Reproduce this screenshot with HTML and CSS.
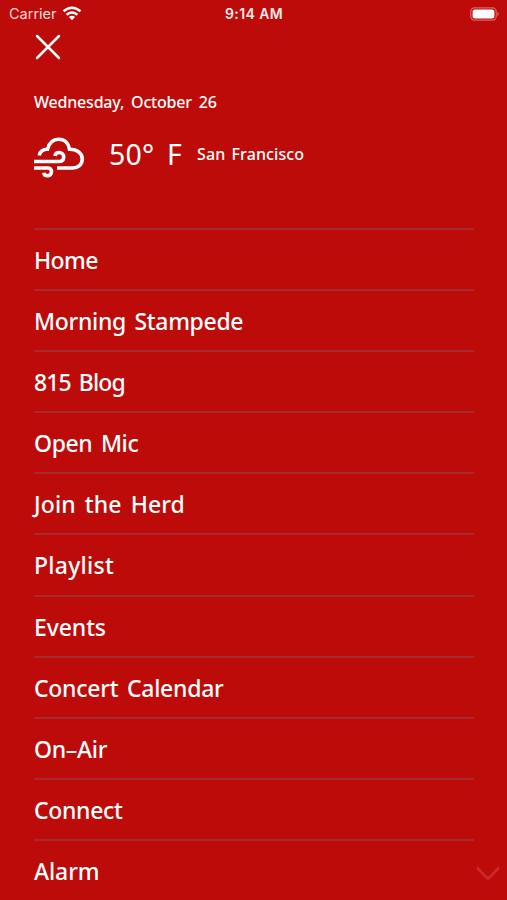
FILE: index.html
```
<!DOCTYPE html>
<html lang="en">
<head>
<meta charset="utf-8">
<title>Menu</title>
<link rel="stylesheet" href="styles.css">
</head>
<body>
<div class="screen">
  <header class="status">
    <div class="carrier"><span>Carrier</span>
      <svg width="20" height="16" viewBox="0 0 20 16" fill="none" stroke="#fff" stroke-width="2.500"><path d="M1.500 5.300Q10-1.700 18.500 5.300M4.600 8.800Q10 4.100 15.400 8.800"/><path d="M6.900 11Q10 8.500 13.100 11L10 14.200Z" fill="#fff" stroke="none"/></svg>
    </div>
    <div class="time">9:14 AM</div>
    <svg class="battery" width="29" height="14" viewBox="0 0 29 14"><rect x=".8" y=".8" width="25.400" height="12.400" rx="3.600" fill="none" stroke="#dc6464" stroke-width="1.200"/><rect x="2.600" y="2.600" width="21.800" height="8.800" rx="2" fill="#fff"/><path d="M27.300 5v4q1.500-.7 1.500-2t-1.500-2Z" fill="#dc6464"/></svg>
  </header>
  <button class="close" aria-label="Close"><svg width="26" height="26" viewBox="0 0 26 26" fill="none" stroke="#fff" stroke-width="2.500" stroke-linecap="round"><path d="M2 2 24 24M24 2 2 24"/></svg></button>
  <p class="date">Wednesday, October 26</p>
  <section class="weather">
    <svg class="cloud" width="52" height="42" viewBox="0 0 52 42" fill="none" stroke="#fff" stroke-width="3.600"><path d="M6.200 18.500C7 14.500 10 12.300 14.500 12.300C16 6 20 2.200 25.700 2.200C31.500 2.200 35.500 6 36.500 12.200C44.500 12.200 49.300 16.500 49.300 22C49.300 27.500 45 31 39.500 31H24"/><path d="M1 24.500H25.500C29 24.500 30.700 22.500 30.700 19.900C30.700 17.200 28.800 15.500 26.200 15.500C23.800 15.500 22.200 16.700 22 19"/><path d="M1 31H14.500C17.300 31 18.500 32.700 18.500 34.800C18.500 37.200 16.800 38.700 14.500 38.700C12.500 38.700 11 37.700 10.800 35.700"/></svg>
    <span class="temp">50° F</span>
    <span class="city">San Francisco</span>
  </section>
  <nav class="menu">
    <a class="home">Home</a>
    <a class="stampede">Morning Stampede</a>
    <a class="blog">815 Blog</a>
    <a class="mic">Open Mic</a>
    <a class="herd">Join the Herd</a>
    <a class="playlist">Playlist</a>
    <a class="events">Events</a>
    <a class="concert">Concert Calendar</a>
    <a class="onair">On–Air</a>
    <a class="connect">Connect</a>
    <a class="alarm">Alarm</a>
  </nav>
  <svg class="more" width="24" height="16" viewBox="0 0 24 16" fill="none" stroke="#c92929" stroke-width="2.800"><path d="M1 1.500 12 13 23 1.500"/></svg>
</div>
</body>
</html>
```
FILE: styles.css
```
* { box-sizing: border-box; }
body { margin: 0; background: #bd0b0a; color: #fff; font-family: "Noto Sans", sans-serif; }
.screen { position: relative; width: 507px; height: 900px; overflow: hidden; }
.status { display: grid; grid-template-columns: 1fr auto 1fr; align-items: center; height: 27px; padding: 0 8px 0 9px; font-family: Inter, sans-serif; }
.carrier { display: flex; align-items: center; gap: 5px; font-size: 14.5px; color: #fbdcdc; }
.time { font-size: 14px; font-weight: 600; letter-spacing: .4px; color: #ffe9e9; }
.battery { justify-self: end; }
.close { display: block; margin: 7px 0 0 35px; padding: 0; border: 0; background: none; height: 26px; width: 26px; }
.close svg { display: block; }
.date { margin: 32px 0 0 34px; height: 20px; font-size: 16px; line-height: 20px; font-weight: 500; letter-spacing: -.2px; word-spacing: 3px; white-space: nowrap; }
.weather { display: flex; align-items: flex-start; height: 42px; margin: 25px 0 0 33px; white-space: nowrap; }
.temp { margin-left: 24px; width: 88px; font-size: 28.5px; line-height: 35px; letter-spacing: .2px; word-spacing: 5px; }
.city { font-size: 16px; font-weight: 500; line-height: 34px; letter-spacing: .1px; word-spacing: 2px; }
.menu { margin: 49px 33px 0 34px; }
.menu a { display: block; height: 61.1px; border-top: 2px solid #a92a2d; font-size: 23px; line-height: 61px; font-weight: 500; word-spacing: 3px; white-space: nowrap; }
.menu .home { letter-spacing: -.6px; }
.menu .stampede { letter-spacing: -.33px; }
.menu .blog { letter-spacing: -.9px; }
.menu .mic { letter-spacing: -.4px; }
.menu .herd { letter-spacing: .1px; }
.menu .playlist { letter-spacing: .27px; }
.menu .events { letter-spacing: -.1px; }
.menu .concert { letter-spacing: -.27px; }
.menu .onair { letter-spacing: -.3px; }
.menu .connect { letter-spacing: -.33px; }
.menu .alarm { letter-spacing: -.1px; }
.more { position: absolute; left: 476px; top: 866px; }
```
